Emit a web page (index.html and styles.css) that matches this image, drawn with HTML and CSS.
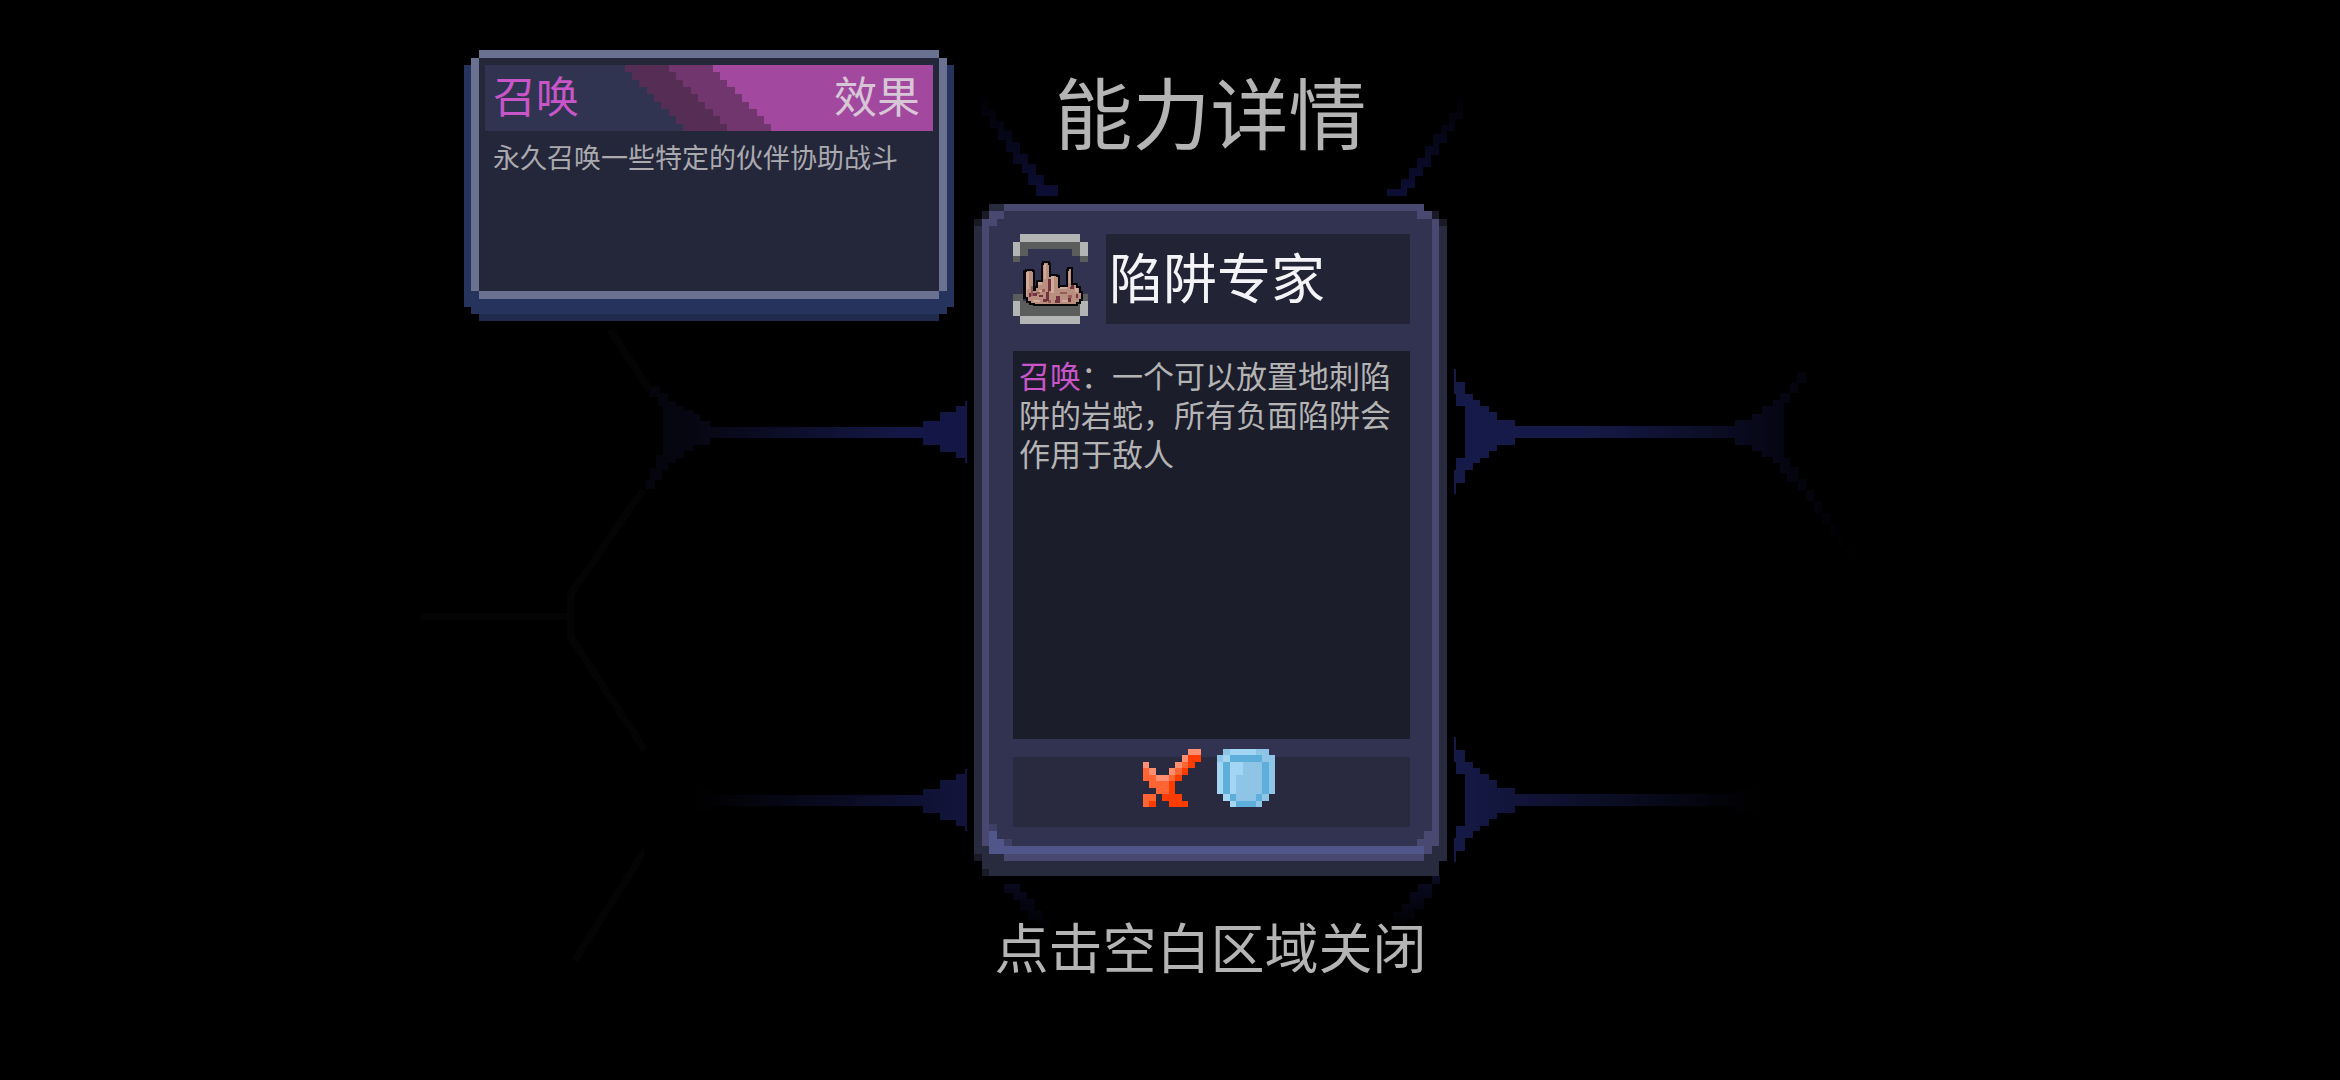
FILE: index.html
```html
<!DOCTYPE html>
<html lang="zh-CN">
<head>
  <meta charset="UTF-8">
  <meta name="viewport" content="width=device-width, initial-scale=1.0">
  <title>能力详情</title>
  <link rel="stylesheet" href="styles.css">
</head>
<body>

<!-- faded hexagon lines behind the card -->
<svg class="backdrop" viewBox="0 0 2340 1080" preserveAspectRatio="xMidYMid slice" shape-rendering="crispEdges" aria-hidden="true">
  <defs>
    <linearGradient id="left-top" gradientUnits="userSpaceOnUse" x1="620" y1="0" x2="900" y2="0">
      <stop offset="0" stop-color="#030308"/>
      <stop offset="0.3" stop-color="#070715"/>
      <stop offset="1" stop-color="#141745"/>
    </linearGradient>
    <linearGradient id="left-bottom" gradientUnits="userSpaceOnUse" x1="690" y1="0" x2="960" y2="0">
      <stop offset="0" stop-color="#000"/>
      <stop offset="1" stop-color="#12143c"/>
    </linearGradient>
    <linearGradient id="right-top" gradientUnits="userSpaceOnUse" x1="1580" y1="0" x2="1860" y2="0">
      <stop offset="0" stop-color="#161a48"/>
      <stop offset="0.7" stop-color="#060614"/>
      <stop offset="1" stop-color="#000"/>
    </linearGradient>
    <linearGradient id="right-bottom" gradientUnits="userSpaceOnUse" x1="1450" y1="0" x2="1760" y2="0">
      <stop offset="0" stop-color="#161a48"/>
      <stop offset="1" stop-color="#000"/>
    </linearGradient>
    <linearGradient id="fade-up" gradientUnits="userSpaceOnUse" x1="0" y1="90" x2="0" y2="195">
      <stop offset="0" stop-color="#000"/>
      <stop offset="1" stop-color="#0d0e34"/>
    </linearGradient>
    <linearGradient id="fade-down" gradientUnits="userSpaceOnUse" x1="0" y1="880" x2="0" y2="930">
      <stop offset="0" stop-color="#0a0a22"/>
      <stop offset="1" stop-color="#000"/>
    </linearGradient>
    <path id="left-branch" d="M650 383H660V390H668V398H676V403H684V407H693V410H700V417H710V423H923V417H940V409H956V403H965V398H967V458H965V453H956V447H940V440H923V434H710V440H693V446H684V453H676V458H668V465H662V474H655V483H645V474H650V463H656V450H663V403H658V394H650z"/>
    <path id="right-branch" d="M1454 367H1456V379H1465V391H1473V397H1480V403H1489V409H1497V416H1515V422H1735V416H1752V410H1762V403H1773V397H1780V390H1790V380H1797V370H1806V380H1798V390H1790V400H1784V453H1790V462H1798V473H1806V484H1814V495H1822V506H1830V517H1838V528H1846V539H1854V550H1846V539H1838V528H1830V517H1822V506H1814V495H1806V484H1798V476H1787V468H1780V458H1773V452H1762V446H1752V440H1735V434H1515V440H1497V446H1489V453H1480V458H1473V465H1465V477H1456V488H1454V465H1456V453H1465V403H1456V391H1454z"/>
  </defs>

  <path fill="none" stroke="#040404" stroke-width="7" d="M420 616H570M643 490L570 595V636L645 750M645 850L575 960M610 330L650 390"/>

  <use href="#left-branch" fill="url(#left-top)" transform="translate(0 -10) scale(1 1.033)"/>
  <use href="#left-branch" fill="url(#left-bottom)" transform="translate(0 358) scale(1 1.033)"/>
  <use href="#right-branch" fill="url(#right-top)" transform="translate(0 -10) scale(1 1.033)"/>
  <use href="#right-branch" fill="url(#right-bottom)" transform="translate(0 358) scale(1 1.033)"/>

  <path fill="url(#fade-up)" d="M980 94h8v15h8v12h8v9h8v12h8v12h8v10h8v11h8v10h6h8v11h-22v-11h-8v-12h-6v-9h-9v-12h-7v-12h-8v-12h-8v-12h-8z"/>
  <path fill="url(#fade-up)" d="M1465 98h-8v15h-8v12h-8v9h-8v12h-8v12h-8v10h-8v11h-8v10h-14v7h20v-8h8v-12h8v-9h8v-12h8v-12h8v-12h8v-12h8v-16z"/>
  <path fill="url(#fade-down)" d="M1004 884h16v8h7v7h8v12h8v9h8v8h-15v-8h-8v-9h-8v-11h-7v-7h-9z"/>
  <path fill="url(#fade-down)" d="M1440 876h-8v8h-14v8h-8v12h-8v8h-8v16h12v-9h8v-10h10v-11h8v-14h8z"/>
</svg>

<main class="stage">
  <aside class="keyword">
    <div class="keyword-head">
      <svg class="stripes" viewBox="0 0 61 9" preserveAspectRatio="none" shape-rendering="crispEdges" aria-hidden="true">
        <path fill="#552d55" d="M19 0h42v9H27V8h-1V7h-1V6h-1V5h-1V4h-1V3h-1V2h-1V1h-1z"/>
        <path fill="#71366e" d="M25 0h36v9H33V8h-1V7h-1V6h-1V5h-1V4h-1V3h-1V2h-1V1h-1z"/>
        <path fill="#a2489f" d="M31 0h30v9H39V8h-1V7h-1V6h-1V5h-1V4h-1V3h-1V2h-1V1h-1z"/>
      </svg>
      <h2 class="keyword-name">召唤</h2>
      <span class="keyword-type">效果</span>
    </div>
    <p class="keyword-text">永久召唤一些特定的伙伴协助战斗</p>
  </aside>

  <section class="detail">
    <h1 class="title">能力详情</h1>

    <article class="card">
      <svg class="frame" viewBox="0 0 63 90" preserveAspectRatio="none" shape-rendering="crispEdges" aria-hidden="true">
        <path fill="#191a26" d="M0 2h1v1H0zM62 2h1v1h-1zM1 1h1v1H1zM61 1h1v1h-1zM0 87h1v1H0zM1 89h1v1H1z"/>
        <path fill="#282a3d" d="M2 0h2v1H2zM0 3h2v84H0zM61 3h2v85h-2zM1 85h61v4H1zM2 89h60v1H2z"/>
        <path fill="#313350" d="M4 1h56v1h1v1h1v83h-1v1H3v-1H1V3h1V2h2z"/>
        <path fill="#484870" d="M4 0h56v1H4zM2 1h2v1H2zM1 2h2v1H1zM1 3h1v83H1zM59 1h2v1h-2zM61 2h1v84h-1zM4 87h56v1H4zM60 84h1v3h-1zM59 85h1v1h-1z"/>
        <path fill="#3e4066" d="M2 83h1v1H2zM4 85h1v1H4z"/>
        <path fill="#50558a" d="M2 84h1v1H2zM2 85h2v1H2zM2 86h58v1H2z"/>
      </svg>

      <header class="card-head">
        <!-- ground spikes -->
        <svg class="ability-icon" viewBox="42 42 222 266" shape-rendering="crispEdges" role="img" aria-label="地刺">
          <path fill="#b3b5b5" d="M64 42h176v22H64zM42 64h22v44H42zM240 64h24v44h-24zM42 240h22v45H42zM240 240h24v45h-24zM64 285h176v23H64z"/>
          <path fill="#5b5d5d" d="M64 64h176v44h-22V87H87v21H64zM42 108h22v16H42zM240 108h24v16h-24zM42 218h30v22H42zM240 218h24v22h-24zM64 240h176v45H64z"/>
          <path fill="#b98f80" stroke="#080609" stroke-width="12" paint-order="stroke" d="M79 154h4v-4h14v4h4v56h10v-8h4v-19h16v-50h4v-4h10v4h4v36h6v-4h14v4h7v32h10v-3h20v-48h3v-4h4v4h2v44h14v8h8v14h5v18h-6v8h-8v6h-14v2H108v-5H96v-6H86v-10h-7z"/>
          <path fill="#d0ab99" d="M79 154h10v50h-6v20h-4zM134 131h7v44h-7zM155 167h9v50h-9zM209 150h3v36h-3zM116 184h11v10h-11zM182 200h20v6h-20zM226 202h8v10h-8zM100 238h22v6h-22zM186 236h18v7h-18zM118 208h12v5h-12z"/>
          <path fill="#965d58" d="M95 196h6v30h-8v-8h2zM110 214h12v6h-12zM128 204h8v8h-8zM180 212h22v6h-22zM204 222h14v8h-14zM146 238h8v8h-8z"/>
          <path fill="#74313e" d="M145 174h8v36h-5v30h-8v-26h5zM102 216h10v10h-10zM118 222h14v6h-14zM132 234h10v8h-10zM168 226h12v21h-14v-9h2zM214 192h8v12h-12v-6h4zM206 232h8v12h-8zM90 216h6v12h-6zM228 218h6v12h-6z"/>
        </svg>
        <h2 class="card-name">陷阱专家</h2>
      </header>

      <p class="card-text"><span class="mark">召唤</span>：一个可以放置地刺陷阱的岩蛇，所有负面陷阱会作用于敌人</p>

      <footer class="card-foot">
        <svg class="stat" viewBox="0 0 9 9" shape-rendering="crispEdges" role="img" aria-label="攻击">
          <path fill="#ff3c00" d="M7 1h2v1H8v1H7v1H6v1H5v2h-2V6h1V4h1V3h1V2h1zM3 7h3v1h1v1H4V8H3zM1 8h1v1H1z"/>
          <path fill="#ff6433" d="M6 2h1v1H6zM5 3h1v1H5zM4 4h1v1H4zM0 3h1v1h1v1h2v2H2V6H1V5H0zM0 7h2v1H1v1H0z"/>
          <path fill="#ff8f70" d="M7 0h2v1H7zM6 1h1v1H6zM5 2h1v1H5zM4 3h1v1H4zM0 2h1v1H0zM1 3h1v1H1zM2 4h2v1H2z"/>
        </svg>
        <svg class="stat" viewBox="0 0 9 9" shape-rendering="crispEdges" role="img" aria-label="护盾">
          <path fill="#8ec5e6" d="M1 0h7v1h1v6H8v1H7v1H2V8H1V7H0V1h1z"/>
          <path fill="#5eaedb" d="M2 1h5v1H2zM1 2h1v5H1zM7 2h1v5H7zM2 7h1v1H2zM6 7h1v1H6zM3 8h3v1H3z"/>
          <path fill="#a3d6f3" d="M2 0h4v1H2zM1 1h1v1H1zM0 2h1v5H0zM2 2h2v2H3v3H2zM1 7h1v1H1zM2 8h1v1H2z"/>
        </svg>
      </footer>
    </article>

    <button class="close-hint" type="button">点击空白区域关闭</button>
  </section>
</main>

</body>
</html>
```
FILE: styles.css
```css
* {
  box-sizing: border-box;
}
body {
  margin: 0;
  min-height: 100vh;
  background-color: #000;
  color: #b4b4b4;
  font-family: "Noto Sans CJK SC", sans-serif;
}
h1, h2, p {
  margin: 0;
  font-weight: normal;
}
.backdrop {
  position: absolute;
  top: 0;
  left: 0;
  width: 100%;
  height: 100%;
}
.stage {
  position: relative;
  display: grid;
  grid-template-columns: 1fr 473px 1fr;
  gap: 20px;
  padding-left: 81px;
}

/* keyword popup, its stepped border is made of shifted shadows */
.keyword {
  justify-self: end;
  align-self: start;
  width: 460px;
  min-height: 233px;
  margin: 58px 15px 0 0;
  padding: 7px 6px;
  background-color: #24263a;
  box-shadow:
    0 -8px #6b7190,
    0 8px #6b7190,
    -8px 0 #6b7190,
    8px 0 #6b7190,
    -15px 7px #26335d,
    15px 7px #26335d,
    -15px 16px #26335d,
    15px 16px #26335d,
    -8px 23px #26335d,
    8px 23px #26335d,
    0 23px #26335d,
    0 30px #202a4c;
}
.keyword-head {
  position: relative;
  display: flex;
  justify-content: space-between;
  height: 66px;
  padding: 0 13px 0 8px;
  background-color: #303450;
  line-height: 58px;
}
.stripes {
  position: absolute;
  top: 0;
  left: 0;
  width: 100%;
  height: 100%;
}
.keyword-name,
.keyword-type {
  position: relative;
  font-size: 43px;
}
.keyword-name,
.mark {
  color: #c955c9;
}
.keyword-type {
  color: #d6c6d6;
}
.keyword-text {
  padding: 8px;
  font-size: 27px;
  line-height: 36px;
  color: #a9a9ae;
}

/* ability card */
.detail {
  display: flex;
  flex-direction: column;
  align-items: center;
  padding-top: 62px;
}
.title {
  font-size: 78px;
  line-height: 96px;
}
.card {
  position: relative;
  display: flex;
  flex-direction: column;
  width: 100%;
  margin: 46px 0 38px;
  padding: 30px 37px 49px 39px;
}
.frame {
  position: absolute;
  top: 0;
  left: 0;
  width: 100%;
  height: 100%;
}
.card-head,
.card-text,
.card-foot {
  position: relative;
}
.card-head {
  display: flex;
  gap: 18px;
}
.ability-icon {
  width: 75px;
  height: 90px;
}
.card-name {
  flex: 1;
  padding-left: 3px;
  background-color: #222436;
  color: #f4f4f8;
  font-size: 54px;
  line-height: 84px;
}
.card-text {
  min-height: 388px;
  margin: 27px 0 18px;
  padding: 4px 6px;
  background-color: #1c1d2b;
  font-size: 31px;
  line-height: 39px;
}
.card-foot {
  display: flex;
  justify-content: center;
  gap: 16px;
  height: 70px;
  padding-right: 5px;
  background-color: #292a40;
}
.stat {
  width: 58px;
  height: 58px;
  margin-top: -8px;
}
.close-hint {
  padding: 0;
  border: none;
  background: none;
  color: inherit;
  font-family: inherit;
  font-size: 54px;
  line-height: 64px;
  white-space: nowrap;
  cursor: pointer;
}
```
